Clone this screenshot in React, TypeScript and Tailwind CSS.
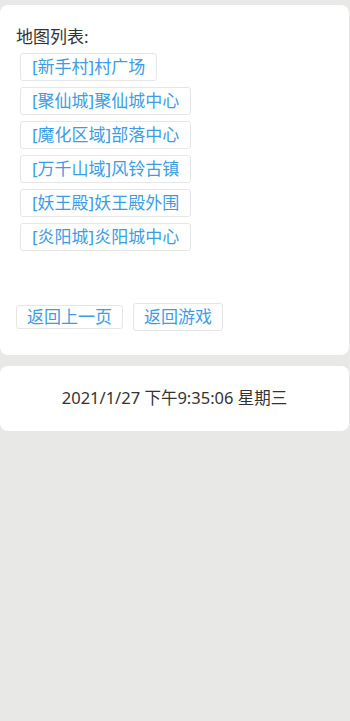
import React from "react";

const maps = [
  "[新手村]村广场",
  "[聚仙城]聚仙城中心",
  "[魔化区域]部落中心",
  "[万千山域]风铃古镇",
  "[妖王殿]妖王殿外围",
  "[炎阳城]炎阳城中心",
];

const font = { fontFamily: '"Noto Sans", "Noto Sans CJK SC", sans-serif' };

export default function App() {
  return (
    <div
      className="min-h-[721px] w-[350px] bg-[#e8e8e6] pt-[5px]"
      style={font}
    >
      <div className="mr-[1px] rounded-lg bg-white px-4 pb-[24px] pt-[20px]">
        <div className="h-[24px] text-[17px] leading-[24px] text-[#333333]">
          地图列表:
        </div>
        <div className="mt-[4px] flex flex-col items-start gap-[6px] pl-1">
          {maps.map((m) => (
            <button
              key={m}
              className="h-[28px] rounded-[3px] border border-[#e6e6e6] bg-white px-[11px] text-[17px] leading-[26px] text-[#3c9de4]"
            >
              {m}
            </button>
          ))}
        </div>
        <div className="mt-[52px] flex items-center gap-[10px]">
          <button className="h-[24px] w-[107px] rounded-[3px] border border-[#e6e6e6] bg-white text-[17px] leading-[22px] text-[#3c9de4]">
            返回上一页
          </button>
          <button className="h-[28px] w-[90px] rounded-[3px] border border-[#e6e6e6] bg-white text-[17px] leading-[26px] text-[#3c9de4]">
            返回游戏
          </button>
        </div>
      </div>
      <div className="mr-[1px] mt-[11px] flex h-[65px] items-center justify-center rounded-lg bg-white text-[16.5px] text-[#333333]">
        2021/1/27 下午9:35:06 星期三
      </div>
    </div>
  );
}
